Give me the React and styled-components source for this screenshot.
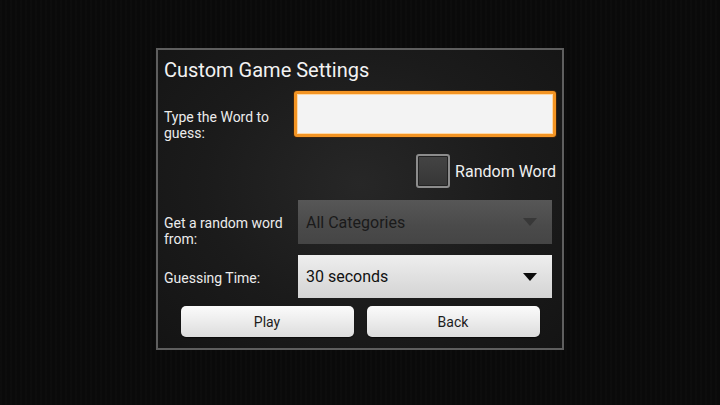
import styled, { createGlobalStyle } from 'styled-components';

const GlobalStyle = createGlobalStyle`
  html, body {
    margin: 0;
    padding: 0;
    height: 100%;
  }
  body {
    background-color: #0a0a0a;
    background-image: repeating-linear-gradient(
      90deg,
      rgba(255, 255, 255, 0.01) 0px,
      rgba(255, 255, 255, 0.01) 2px,
      rgba(0, 0, 0, 0) 2px,
      rgba(0, 0, 0, 0) 5px
    );
    font-family: Roboto, 'Noto Sans', 'Liberation Sans', sans-serif;
  }
`;

const Screen = styled.div`
  width: 720px;
  height: 405px;
  display: flex;
  justify-content: center;
  align-items: flex-start;
  padding-top: 48px;
  box-sizing: border-box;
`;

const Panel = styled.div`
  width: 408px;
  box-sizing: border-box;
  border: 2px solid #5e5e5e;
  padding: 8px 6px 11px 6px;
  display: flex;
  flex-direction: column;
  background: radial-gradient(
    ellipse at 50% 45%,
    #272727 0%,
    #1b1b1b 55%,
    #141414 100%
  );
`;

const Title = styled.div`
  font-size: 20px;
  line-height: 24px;
  color: #f2f2f2;
`;

const Row = styled.div`
  display: grid;
  grid-template-columns: 130px 1fr;
  grid-template-rows: ${(p) => p.$height}px;
  margin-top: ${(p) => p.$gap}px;
`;

const Label = styled.div`
  font-size: 14px;
  line-height: 16px;
  color: #ececec;
  padding-top: ${(p) => p.$offset}px;
  white-space: normal;
`;

const TextInput = styled.input`
  height: 46px;
  box-sizing: border-box;
  border: 3px solid #f39423;
  border-radius: 3px;
  background: #f3f3f3;
  box-shadow: 0 0 0 1px #3a2410, inset 0 0 0 1px #ffd9a8;
  outline: none;
  font-family: inherit;
  font-size: 16px;
  padding: 0 8px;
`;

const CheckRow = styled.div`
  display: flex;
  justify-content: flex-end;
  align-items: center;
  gap: 5px;
  margin-top: 17px;
`;

const CheckBox = styled.div`
  width: 34px;
  height: 34px;
  box-sizing: border-box;
  border: 2px solid #8c8c8c;
  border-radius: 3px;
  background: linear-gradient(#444444, #363636);
  box-shadow: inset 0 0 0 1px #222;
`;

const CheckLabel = styled.span`
  font-size: 16px;
  color: #f0f0f0;
`;

const Select = styled.div`
  margin: 0 4px;
  display: flex;
  align-items: center;
  justify-content: space-between;
  padding: 0 15px 0 8px;
  box-sizing: border-box;
  font-size: 16px;
  color: ${(p) => (p.$disabled ? '#1a1a1a' : '#111111')};
  background: ${(p) =>
    p.$disabled
      ? 'linear-gradient(#575757, #4a4a4a 60%, #454545)'
      : 'linear-gradient(#eeeeee, #dedede 60%, #d4d4d4)'};
`;

const Arrow = styled.svg`
  width: 14px;
  height: 8px;
  fill: ${(p) => (p.$disabled ? '#383838' : '#0c0c0c')};
`;

const ButtonRow = styled.div`
  display: flex;
  justify-content: center;
  gap: 13px;
  margin-top: 8px;
`;

const Button = styled.button`
  width: 173px;
  height: 31px;
  border: none;
  border-radius: 5px;
  background: linear-gradient(#fbfbfb, #ececec 50%, #dcdcdc);
  box-shadow: 0 1px 1px rgba(0, 0, 0, 0.6);
  font-family: inherit;
  font-size: 14px;
  color: #1c1c1c;
  cursor: pointer;
`;

function DropArrow({ disabled }) {
  return (
    <Arrow $disabled={disabled} viewBox="0 0 14 8">
      <polygon points="0,0 14,0 7,8" />
    </Arrow>
  );
}

function App() {
  return (
    <>
      <GlobalStyle />
      <Screen>
        <Panel>
          <Title>Custom Game Settings</Title>
          <Row $gap={9} $height={46}>
            <Label $offset={18}>Type the Word to guess:</Label>
            <TextInput type="text" />
          </Row>
          <CheckRow>
            <CheckBox />
            <CheckLabel>Random Word</CheckLabel>
          </CheckRow>
          <Row $gap={12} $height={44}>
            <Label $offset={15}>Get a random word from:</Label>
            <Select $disabled>
              All Categories
              <DropArrow disabled />
            </Select>
          </Row>
          <Row $gap={11} $height={43}>
            <Label $offset={15}>Guessing Time:</Label>
            <Select>
              30 seconds
              <DropArrow />
            </Select>
          </Row>
          <ButtonRow>
            <Button>Play</Button>
            <Button>Back</Button>
          </ButtonRow>
        </Panel>
      </Screen>
    </>
  );
}

export default App;
